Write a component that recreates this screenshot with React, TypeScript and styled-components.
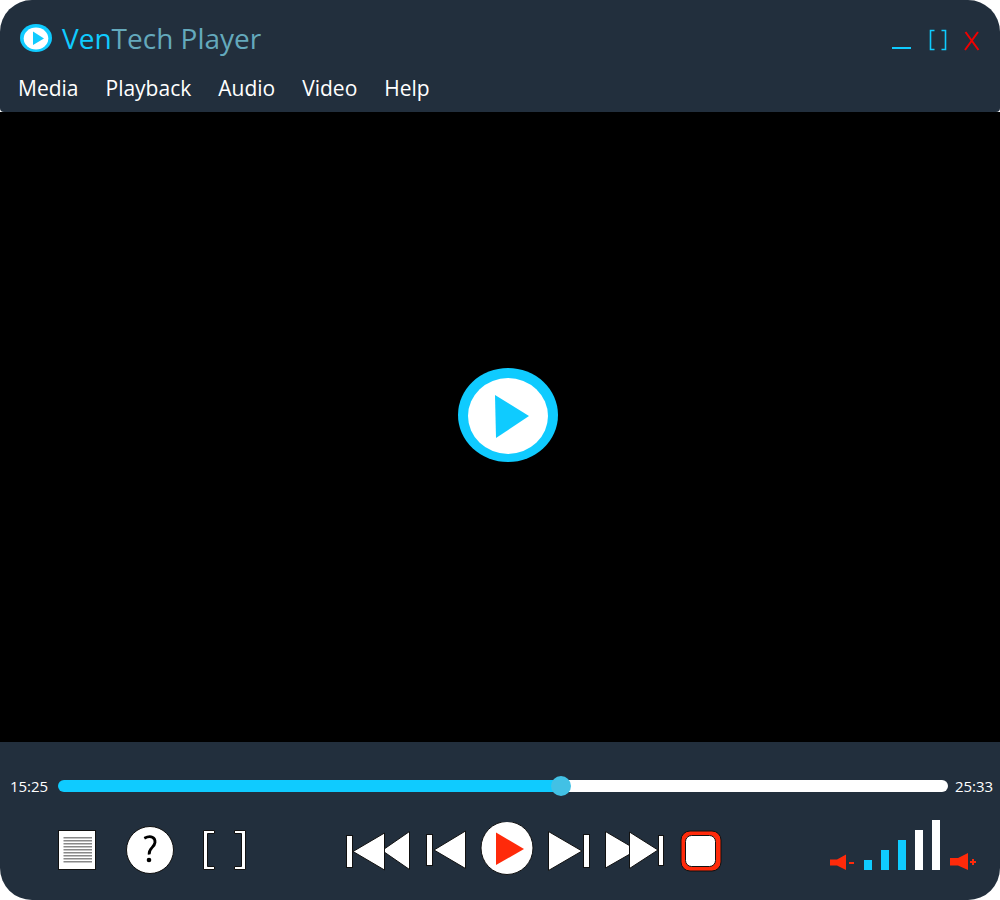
import React from 'react';
import styled, { createGlobalStyle } from 'styled-components';

const cyan = '#0fcbff';
const navy = '#222f3d';
const red = '#ff2a0a';

const GlobalStyle = createGlobalStyle`
  *, *::before, *::after { box-sizing: border-box; }
  body {
    margin: 0;
    background: #fff;
    font-family: "Open Sans", "Noto Sans", sans-serif;
  }
`;

const Player = styled.main`
  display: flex;
  flex-direction: column;
  min-height: 100vh;
  border-radius: 32px;
  overflow: hidden;
`;

const Header = styled.header`
  background: ${navy};
  border-radius: 0 0 4px 4px;
  padding-bottom: 8px;
`;

const TitleBar = styled.div`
  display: flex;
  align-items: center;
  justify-content: space-between;
  padding: 16px 16px 0 20px;
`;

const Brand = styled.div`
  display: flex;
  align-items: center;
  gap: 10px;
`;

const Title = styled.h1`
  margin: 0;
  font-size: 28px;
  font-weight: 400;
  line-height: 44px;
  color: #64a9bc;
`;

const TitleAccent = styled.span`
  color: ${cyan};
`;

const PlainButton = styled.button`
  display: block;
  padding: 0;
  border: 0;
  background: none;
  color: inherit;
  font: inherit;
  cursor: pointer;
  svg { display: block; }
`;

const WindowControls = styled.div`
  display: flex;
  align-items: center;
  gap: 10px;
  padding-top: 4px;
`;

const Nav = styled.nav`
  display: flex;
  gap: 27px;
  padding: 12px 18px 0;
`;

const NavButton = styled(PlainButton)`
  color: #fff;
  font-size: 21px;
  line-height: 32px;
`;

const Screen = styled.section`
  flex: 1;
  display: flex;
  align-items: center;
  justify-content: center;
  min-height: 240px;
  padding: 0 0 24px 16px;
  background: #000;
`;

const Footer = styled.footer`
  background: ${navy};
  padding: 32px 0 20px;
`;

const Timeline = styled.div`
  display: grid;
  grid-template-columns: 58px 1fr 52px;
  align-items: center;
`;

const Time = styled.time`
  color: #fff;
  font-size: 15px;
  line-height: 24px;
  text-align: center;
`;

const Seek = styled.input`
  appearance: none;
  display: block;
  width: 100%;
  height: 20px;
  margin: 0;
  background: none;
  cursor: pointer;

  &::-webkit-slider-runnable-track {
    height: 12px;
    border-radius: 6px;
    background: linear-gradient(to right, ${cyan} var(--played), #fff var(--played));
  }

  &::-webkit-slider-thumb {
    appearance: none;
    width: 20px;
    height: 20px;
    margin-top: -4px;
    border-radius: 50%;
    background: #42c1e5;
  }
`;

const Controls = styled.div`
  display: grid;
  grid-template-columns: 1fr auto 1fr;
  align-items: center;
  padding: 22px 22px 0 57px;
`;

const Tools = styled.div`
  display: flex;
  align-items: center;
  gap: 28px;
`;

const Transport = styled.div`
  display: flex;
  align-items: center;
  gap: 14px;
  padding-left: 34px;
`;

const Volume = styled.div`
  display: flex;
  align-items: flex-end;
  justify-content: flex-end;
  gap: 10px;
  padding-bottom: 10px;
`;

const Levels = styled.div`
  display: flex;
  align-items: flex-end;
  gap: 9px;
`;

const Level = styled.span<{ $height: number; $on: boolean }>`
  width: 8px;
  height: ${(p) => p.$height}px;
  background: ${(p) => (p.$on ? cyan : '#fff')};
`;

const Logo = () => (
  <svg width="32" height="28" viewBox="0 0 32 28" aria-hidden="true">
    <ellipse cx="16" cy="14" rx="16" ry="14" fill={cyan} />
    <ellipse cx="16" cy="14.500" rx="12.300" ry="11" fill="#fff" />
    <path d="M13 7.500L24 14.500L13 21Z" fill={cyan} />
  </svg>
);

const Emblem = () => (
  <svg width="100" height="94" viewBox="0 0 100 94" aria-hidden="true">
    <ellipse cx="50" cy="47" rx="50" ry="47" fill={cyan} />
    <ellipse cx="50" cy="48" rx="40" ry="38" fill="#fff" />
    <path d="M37 27L71 48L38 70Z" fill={cyan} />
  </svg>
);

const menus = ['Media', 'Playback', 'Audio', 'Video', 'Help'];
const levels = [10, 20, 30, 40, 50];
const shape = { fill: '#fff', stroke: '#111', strokeWidth: 1 };

export default function App() {
  const [position, setPosition] = React.useState(925);
  const [volume, setVolume] = React.useState(3);
  const duration = 1533;
  const range = 1634;
  const clock = (s: number) => `${Math.floor(s / 60)}:${String(s % 60).padStart(2, '0')}`;
  return (
    <>
      <GlobalStyle />
      <Player>
        <Header>
          <TitleBar>
            <Brand>
              <Logo />
              <Title><TitleAccent>Ven</TitleAccent>Tech Player</Title>
            </Brand>
            <WindowControls>
              <PlainButton aria-label="Minimize">
                <svg width="26" height="28"><path d="M4 22H23" stroke={cyan} strokeWidth="2" /></svg>
              </PlainButton>
              <PlainButton aria-label="Maximize">
                <svg width="26" height="28" fill="none" stroke={cyan} strokeWidth="1.600"><path d="M10.500 4.500H6.500V23.500H10.500 M17.500 4.500H21.500V23.500H17.500" /></svg>
              </PlainButton>
              <PlainButton aria-label="Close">
                <svg width="24" height="28" fill="none" stroke="#f00000" strokeWidth="2"><path d="M5.500 6L18.500 24 M18 6L5 24" /></svg>
              </PlainButton>
            </WindowControls>
          </TitleBar>
          <Nav>{menus.map((m) => <NavButton key={m}>{m}</NavButton>)}</Nav>
        </Header>
        <Screen aria-label="Video">
          <PlainButton aria-label="Play video"><Emblem /></PlainButton>
        </Screen>
        <Footer>
          <Timeline>
            <Time>{clock(position)}</Time>
            <Seek
              type="range"
              aria-label="Seek"
              min={0}
              max={range}
              value={position}
              onChange={(e) => setPosition(Number(e.target.value))}
              style={{ '--played': `${(position / range) * 100}%` } as React.CSSProperties}
            />
            <Time>{clock(duration)}</Time>
          </Timeline>
          <Controls>
            <Tools>
              <PlainButton aria-label="Playlist">
                <svg width="40" height="40">
                  <rect x="1.500" y="0.500" width="37" height="39" {...shape} />
                  {[7, 10, 13, 16, 19, 22, 25, 28, 31].map((y) => <path key={y} d={`M6.500 ${y + 0.7}H35`} stroke="#888" strokeWidth="1.400" />)}
                </svg>
              </PlainButton>
              <PlainButton aria-label="Help">
                <svg width="49" height="48">
                  <circle cx="25" cy="24" r="23.500" {...shape} />
                  <path d="M19.300 12.300C26 8.800 30.500 11.500 30 16.500C29.500 21.500 23.500 22 24.200 28.500" fill="none" stroke="#000" strokeWidth="2.800" />
                  <circle cx="24" cy="34" r="2.300" />
                </svg>
              </PlainButton>
              <PlainButton aria-label="Full screen">
                <svg width="46" height="40">
                  <path d="M1.500 0.500H12.500V3.500H5.500V36.500H12.500V39.500H1.500Z M32.500 0.500H43.500V39.500H32.500V36.500H39.500V3.500H32.500Z" {...shape} />
                </svg>
              </PlainButton>
            </Tools>
            <Transport>
              <PlainButton aria-label="Rewind">
                <svg width="66" height="42">
                  <path d="M63.500 2.500V40.500L36 21.500Z" {...shape} />
                  <path d="M38.500 4V41L7 22.500Z" {...shape} />
                  <rect x="0.500" y="6.500" width="6" height="32" {...shape} />
                </svg>
              </PlainButton>
              <PlainButton aria-label="Previous">
                <svg width="40" height="42">
                  <path d="M39.500 2V39.500L8 21Z" {...shape} />
                  <rect x="0.500" y="5.500" width="6" height="31" {...shape} />
                </svg>
              </PlainButton>
              <PlainButton aria-label="Play">
                <svg width="54" height="56">
                  <ellipse cx="27" cy="26" rx="26" ry="26.500" {...shape} />
                  <path d="M16 10.500V43L44 27Z" fill={red} />
                </svg>
              </PlainButton>
              <PlainButton aria-label="Next">
                <svg width="42" height="42">
                  <path d="M0.500 2.500V41.500L34 22Z" {...shape} />
                  <rect x="35.500" y="5.500" width="6" height="33" {...shape} />
                </svg>
              </PlainButton>
              <PlainButton aria-label="Fast forward">
                <svg width="61" height="42">
                  <path d="M1.500 2.500V39L33 21Z" {...shape} />
                  <path d="M25.500 3V39.500L54 21Z" {...shape} />
                  <rect x="54.500" y="6.500" width="5" height="30" {...shape} />
                </svg>
              </PlainButton>
              <PlainButton aria-label="Stop">
                <svg width="44" height="44">
                  <rect x="2" y="3" width="40" height="40" rx="9" fill={red} stroke="#111" />
                  <rect x="6.500" y="7.500" width="30" height="31" rx="6" {...shape} />
                </svg>
              </PlainButton>
            </Transport>
            <Volume>
              <PlainButton aria-label="Volume down" onClick={() => setVolume(Math.max(0, volume - 1))}>
                <svg width="24" height="18" fill={red}>
                  <path d="M0 7.500H7L16 2.500V18L7 13.500H0Z M19 10H24V12H19Z" />
                </svg>
              </PlainButton>
              <Levels>
                {levels.map((h, i) => <Level key={h} $height={h} $on={i < volume} />)}
              </Levels>
              <PlainButton aria-label="Volume up" onClick={() => setVolume(Math.min(5, volume + 1))}>
                <svg width="28" height="20" fill={red}>
                  <path d="M0 8H8L18 3V20L8 15.500H0Z M20 11H22V9H24V11H26V13H24V15H22V13H20Z" />
                </svg>
              </PlainButton>
            </Volume>
          </Controls>
        </Footer>
      </Player>
    </>
  );
}
